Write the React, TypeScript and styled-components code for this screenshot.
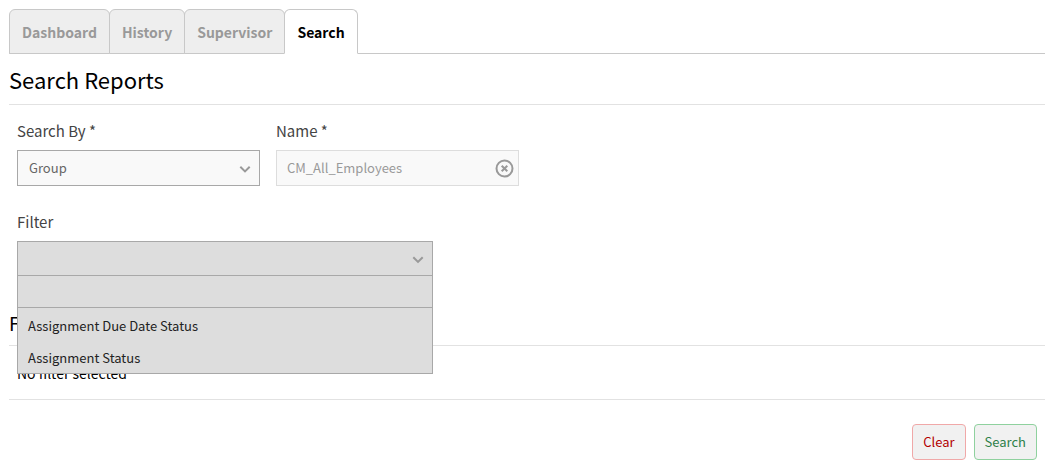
import React, { useState } from "react";
import styled, { createGlobalStyle } from "styled-components";

const GlobalStyle = createGlobalStyle`
  *, *::before, *::after { box-sizing: border-box; }
  body {
    margin: 0;
    background: #fff;
    color: #000;
    font: 14px/20px "Noto Sans CJK SC", sans-serif;
  }
  button, input, select { font: inherit; color: inherit; }
`;

const Page = styled.main`
  padding: 9px 12px 12px 9px;
`;

const TabBar = styled.div`
  display: flex;
  border-bottom: 1px solid #c8c8c8;
`;

const Tab = styled.button<{ $active?: boolean }>`
  height: 45px;
  margin: 0 -1px -1px 0;
  padding: 0 12px;
  border: 1px solid #c8c8c8;
  border-bottom-color: ${(p) => (p.$active ? "#fff" : "#c8c8c8")};
  border-radius: 6px 6px 0 0;
  background: ${(p) => (p.$active ? "#fff" : "#eee")};
  color: ${(p) => (p.$active ? "#000" : "#999")};
  font-size: 14px;
  font-weight: 700;
  cursor: pointer;
`;

const SectionTitle = styled.h2`
  margin: 0;
  padding: 10px 0;
  border-bottom: 1px solid #e2e2e2;
  font-size: 22px;
  line-height: 30px;
  font-weight: 400;
`;

const SubsectionTitle = styled.h3`
  margin: 0;
  padding: 22px 0 7px;
  border-bottom: 1px solid #e2e2e2;
  font-size: 19px;
  line-height: 30px;
  font-weight: 400;
`;

const FieldRow = styled.div`
  display: flex;
  padding: 15px 0 10px;
`;

const Field = styled.div<{ $columns: number }>`
  width: calc(100% / 12 * ${(p) => p.$columns});
  padding: 0 8px;
`;

const Label = styled.label`
  display: block;
  margin-bottom: 9px;
  color: #444;
  font-size: 15px;
  line-height: 21px;
`;

const Control = styled.div`
  position: relative;
  display: flex;
`;

const Select = styled.select<{ $open?: boolean }>`
  appearance: none;
  width: 100%;
  height: ${(p) => (p.$open ? 35 : 36)}px;
  padding: 0 32px 0 11px;
  border: 1px solid #a8a8a8;
  border-bottom-width: ${(p) => (p.$open ? 0 : 1)}px;
  border-radius: 0;
  background: ${(p) => (p.$open ? "#ddd" : "#f9f9f9")};
  color: #666;
  font-size: 13px;
  outline: none;
`;

const ChevronIcon = styled.svg`
  position: absolute;
  right: 9px;
  top: 0;
  bottom: 0;
  height: 100%;
  pointer-events: none;
`;

const NameInput = styled.input`
  width: 100%;
  height: 36px;
  padding: 0 32px 2px 10px;
  border: 1px solid #ddd;
  border-radius: 0;
  background: #f9f9f9;
  color: #999;
  font-size: 13px;
  outline: none;
`;

const ClearIconButton = styled.button`
  position: absolute;
  right: 4px;
  top: 8px;
  display: flex;
  padding: 0;
  border: 0;
  background: none;
  cursor: pointer;
`;

const Menu = styled.div`
  position: absolute;
  top: 100%;
  left: 0;
  right: 0;
  margin-top: -1px;
  border: 1px solid #a8a8a8;
  background: #ddd;
`;

const MenuSearch = styled.input`
  display: block;
  width: 100%;
  height: 32px;
  padding: 0 11px;
  border: 0;
  border-bottom: 1px solid #a8a8a8;
  background: transparent;
  font-size: 13px;
  outline: none;
`;

const Options = styled.ul`
  margin: 0;
  padding: 1px 0 0;
  list-style: none;
`;

const Option = styled.li`
  height: 32px;
  padding: 0 10px;
  color: #222;
  font-size: 13px;
  line-height: 34px;
  cursor: pointer;
`;

const Selection = styled.p`
  margin: 0;
  padding: 17px 8px 16px;
  border-bottom: 1px solid #e2e2e2;
`;

const Actions = styled.div`
  display: flex;
  justify-content: flex-end;
  gap: 8px;
  padding: 24px 8px 0;
`;

const ActionButton = styled.button<{ $tone: "danger" | "success" }>`
  height: 36px;
  padding: 0 10px;
  border: 1px solid ${(p) => (p.$tone === "danger" ? "#f0a8a8" : "#8fd19e")};
  border-radius: 4px;
  background: #f1f1f1;
  color: ${(p) => (p.$tone === "danger" ? "#b30000" : "#2e8049")};
  font-size: 13px;
  cursor: pointer;
`;

const Chevron = () => (
  <ChevronIcon width="12" viewBox="0 -2 12 8" fill="none" aria-hidden="true">
    <path d="M1.3 .7 6 5.4l4.7-4.7" stroke="#999" strokeWidth="2" />
  </ChevronIcon>
);

const tabs = ["Dashboard", "History", "Supervisor", "Search"];
const filters = ["Assignment Due Date Status", "Assignment Status"];

export default function App() {
  const [tab, setTab] = useState("Search");
  const [name, setName] = useState("CM_All_Employees");
  const [query, setQuery] = useState("");

  return (
    <>
      <GlobalStyle />
      <Page>
        <TabBar role="tablist">
          {tabs.map((t) => (
            <Tab key={t} role="tab" aria-selected={t === tab} $active={t === tab} onClick={() => setTab(t)}>
              {t}
            </Tab>
          ))}
        </TabBar>

        <SectionTitle>Search Reports</SectionTitle>
        <FieldRow>
          <Field $columns={3}>
            <Label htmlFor="search-by">Search By *</Label>
            <Control>
              <Select id="search-by" defaultValue="Group">
                <option>Group</option>
              </Select>
              <Chevron />
            </Control>
          </Field>
          <Field $columns={3}>
            <Label htmlFor="name">Name *</Label>
            <Control>
              <NameInput id="name" value={name} onChange={(e) => setName(e.target.value)} />
              <ClearIconButton aria-label="Clear name" onClick={() => setName("")}>
                <svg width="20" height="20" viewBox="0 0 20 20" fill="none" stroke="#999" strokeWidth="2">
                  <circle cx="9.5" cy="10.5" r="8" />
                  <path d="m6.7 7.7 5.6 5.6m0-5.6-5.6 5.6" />
                </svg>
              </ClearIconButton>
            </Control>
          </Field>
        </FieldRow>

        <FieldRow>
          <Field $columns={5}>
            <Label htmlFor="filter">Filter</Label>
            <Control>
              <Select id="filter" $open defaultValue="">
                <option value="" />
                {filters.map((f) => (
                  <option key={f}>{f}</option>
                ))}
              </Select>
              <Chevron />
              <Menu>
                <MenuSearch aria-label="Search filters" value={query} onChange={(e) => setQuery(e.target.value)} />
                <Options role="listbox" aria-label="Filter">
                  {filters
                    .filter((f) => f.toLowerCase().includes(query.toLowerCase()))
                    .map((f) => (
                      <Option key={f} role="option" aria-selected={false}>
                        {f}
                      </Option>
                    ))}
                </Options>
              </Menu>
            </Control>
          </Field>
        </FieldRow>

        <SubsectionTitle>Filters</SubsectionTitle>
        <Selection>No filter selected</Selection>

        <Actions>
          <ActionButton $tone="danger">Clear</ActionButton>
          <ActionButton $tone="success">Search</ActionButton>
        </Actions>
      </Page>
    </>
  );
}
